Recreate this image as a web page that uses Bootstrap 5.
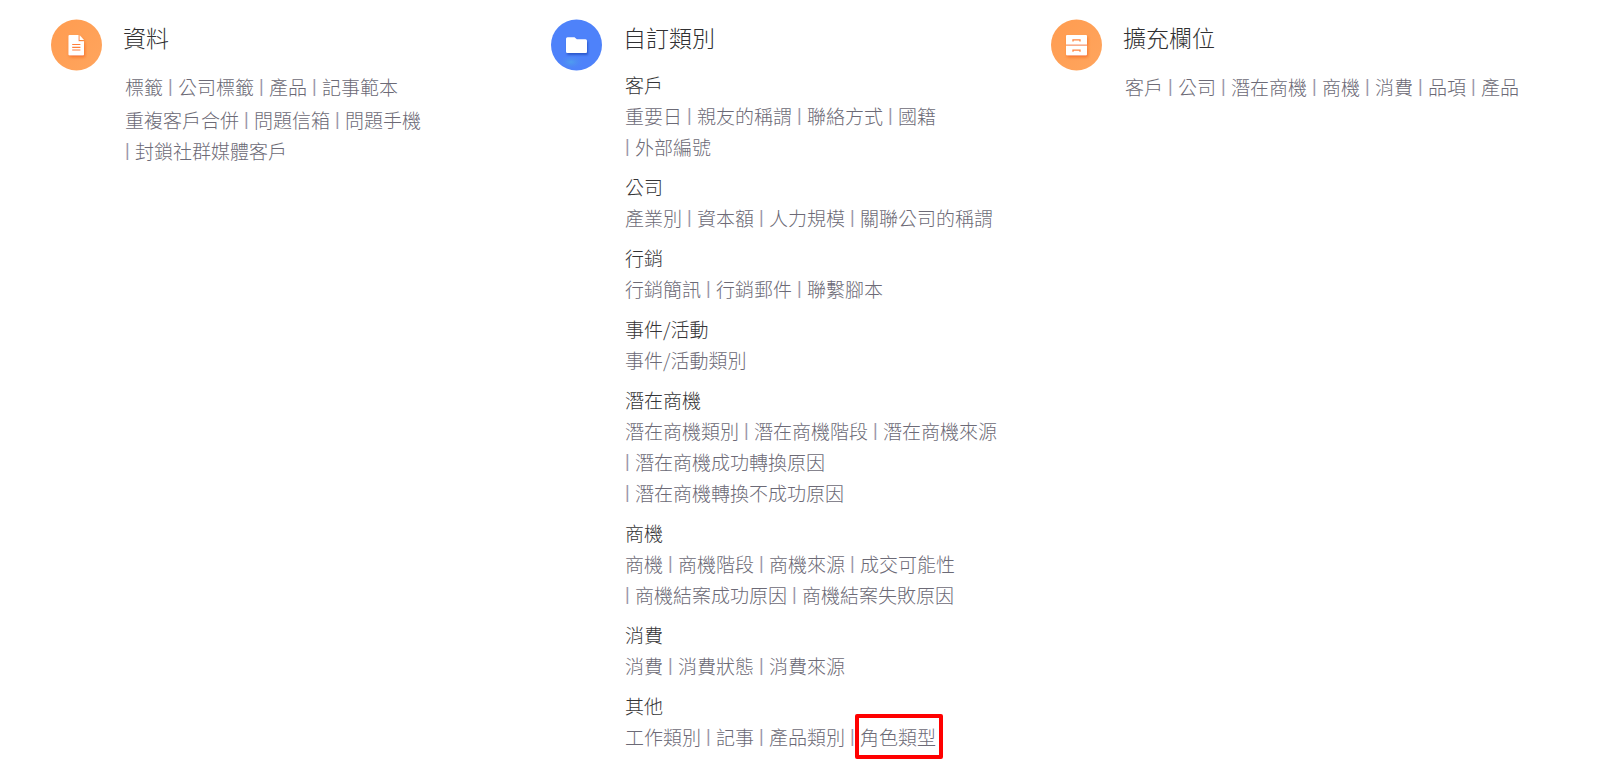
<!DOCTYPE html>
<html lang="zh-Hant">
<head>
<meta charset="utf-8">
<meta name="viewport" content="width=device-width, initial-scale=1">
<title>設定</title>
<link href="https://cdn.jsdelivr.net/npm/bootstrap@5.3.0/dist/css/bootstrap.min.css" rel="stylesheet">
<style>
  body { font-family: "Noto Sans CJK TC", "Liberation Sans", sans-serif; font-weight: 300; font-size: 19px; line-height: 31px; background: #fff; }
  .settings { padding: 19px 50px 24px; }
  .settings-icon { width: 52px; height: 52px; margin-right: 21px; }
  .panel-title { font-size: 23px; font-weight: 300; line-height: 37px; color: #303032; margin: 0; }
  .panel-body { padding: 0 24px 0 2px; }
  .spaced { padding-top: 15px; }
  .row-gap-after { margin-bottom: 2px; }
  .group { margin-bottom: 9px; }
  .group-title { font-size: 19px; font-weight: 300; line-height: 31px; color: #343436; margin: 0; }
  .groups { padding-top: 13px; }
  .link-row { column-gap: 5px; }
  .link-row li { display: flex; height: 31px; }
  .link-row a { color: #6c6a76; text-decoration: none; white-space: nowrap; }
  .link-row a:hover { color: #4f83f5; }
  .link-row li:not(:first-child)::before { content: "|"; width: 10px; color: #9c98ab; font-family: "Liberation Sans", sans-serif; font-size: 18px; }
  .link-row .highlight { position: relative; }
  .highlight::after { content: ""; position: absolute; inset: -7px -7px -7px -5px; border: 4px solid #f00; border-radius: 2px; pointer-events: none; }
</style>
</head>
<body>
<main class="container-fluid settings">
  <div class="row g-0">
    <section class="col-4 d-flex align-items-start">
      <svg class="settings-icon flex-shrink-0" viewBox="0 0 52 52" aria-hidden="true">
        <defs>
          <linearGradient id="orange" x1="0" y1="0" x2="1" y2="1"><stop offset="0" stop-color="#ff9c50"/><stop offset="1" stop-color="#ffa55e"/></linearGradient>
          <filter id="glow" x="-50%" y="-50%" width="200%" height="200%"><feDropShadow dx="1" dy="2" stdDeviation="1.5" flood-color="#f2621c" flood-opacity=".7"/></filter>
        </defs>
        <circle cx="26.5" cy="26" r="25.5" fill="url(#orange)"/>
        <g filter="url(#glow)">
          <path fill="#fff" d="M19.500 16h9v6.200h5.500v13.300a.8.8 0 0 1-.8.8H19.300a.8.8 0 0 1-.8-.8V17a1 1 0 0 1 1-1z"/>
          <path fill="#fff" d="M29.700 16.200v4.700h4.300z"/>
        </g>
        <path stroke="#ff7f3c" stroke-width="1.200" d="M22.200 25.500h8.200M22.200 28.300h8.200M22.200 31h8.200"/>
      </svg>
      <div class="flex-grow-1">
        <h2 class="panel-title">資料</h2>
        <div class="panel-body spaced">
          <ul class="link-row row-gap-after list-unstyled d-flex flex-wrap">
            <li><a href="#">標籤</a></li><li><a href="#">公司標籤</a></li><li><a href="#">產品</a></li><li><a href="#">記事範本</a></li>
          </ul>
          <ul class="link-row list-unstyled d-flex flex-wrap mb-0">
            <li><a href="#">重複客戶合併</a></li><li><a href="#">問題信箱</a></li><li><a href="#">問題手機</a></li><li><a href="#">封鎖社群媒體客戶</a></li>
          </ul>
        </div>
      </div>
    </section>

    <section class="col-4 d-flex align-items-start">
      <svg class="settings-icon flex-shrink-0" viewBox="0 0 52 52" aria-hidden="true">
        <defs>
          <radialGradient id="speck"><stop offset="0" stop-color="#4fa5ec" stop-opacity=".8"/><stop offset="1" stop-color="#4f8af0" stop-opacity="0"/></radialGradient>
          <filter id="shade" x="-50%" y="-50%" width="200%" height="200%"><feDropShadow dx="1" dy="2" stdDeviation="1.2" flood-color="#1a45b8" flood-opacity=".7"/></filter>
        </defs>
        <circle cx="26.5" cy="26" r="25.5" fill="#4e82fa"/>
        <ellipse cx="21" cy="43" rx="12" ry="7" fill="url(#speck)"/>
        <path filter="url(#shade)" fill="#fff" d="M17.500 18.300h7l2.300 2h8.700a1.500 1.500 0 0 1 1.500 1.500v10.800a1.500 1.500 0 0 1-1.500 1.500h-18a1.500 1.500 0 0 1-1.500-1.500V19.800a1.500 1.500 0 0 1 1.500-1.500z"/>
      </svg>
      <div class="flex-grow-1">
        <h2 class="panel-title">自訂類別</h2>
        <div class="panel-body groups">
          <div class="group">
            <h3 class="group-title">客戶</h3>
            <ul class="link-row list-unstyled d-flex flex-wrap mb-0">
              <li><a href="#">重要日</a></li><li><a href="#">親友的稱謂</a></li><li><a href="#">聯絡方式</a></li><li><a href="#">國籍</a></li><li class="w-100"><a href="#">外部編號</a></li>
            </ul>
          </div>
          <div class="group">
            <h3 class="group-title">公司</h3>
            <ul class="link-row list-unstyled d-flex flex-wrap mb-0">
              <li><a href="#">產業別</a></li><li><a href="#">資本額</a></li><li><a href="#">人力規模</a></li><li><a href="#">關聯公司的稱謂</a></li>
            </ul>
          </div>
          <div class="group">
            <h3 class="group-title">行銷</h3>
            <ul class="link-row list-unstyled d-flex flex-wrap mb-0">
              <li><a href="#">行銷簡訊</a></li><li><a href="#">行銷郵件</a></li><li><a href="#">聯繫腳本</a></li>
            </ul>
          </div>
          <div class="group">
            <h3 class="group-title">事件/活動</h3>
            <ul class="link-row list-unstyled d-flex flex-wrap mb-0">
              <li><a href="#">事件/活動類別</a></li>
            </ul>
          </div>
          <div class="group">
            <h3 class="group-title">潛在商機</h3>
            <ul class="link-row list-unstyled d-flex flex-wrap mb-0">
              <li><a href="#">潛在商機類別</a></li><li><a href="#">潛在商機階段</a></li><li><a href="#">潛在商機來源</a></li><li><a href="#">潛在商機成功轉換原因</a></li><li><a href="#">潛在商機轉換不成功原因</a></li>
            </ul>
          </div>
          <div class="group">
            <h3 class="group-title">商機</h3>
            <ul class="link-row list-unstyled d-flex flex-wrap mb-0">
              <li><a href="#">商機</a></li><li><a href="#">商機階段</a></li><li><a href="#">商機來源</a></li><li><a href="#">成交可能性</a></li><li><a href="#">商機結案成功原因</a></li><li><a href="#">商機結案失敗原因</a></li>
            </ul>
          </div>
          <div class="group">
            <h3 class="group-title">消費</h3>
            <ul class="link-row list-unstyled d-flex flex-wrap mb-0">
              <li><a href="#">消費</a></li><li><a href="#">消費狀態</a></li><li><a href="#">消費來源</a></li>
            </ul>
          </div>
          <div>
            <h3 class="group-title">其他</h3>
            <ul class="link-row list-unstyled d-flex flex-wrap mb-0">
              <li><a href="#">工作類別</a></li><li><a href="#">記事</a></li><li><a href="#">產品類別</a></li><li><a href="#" class="highlight">角色類型</a></li>
            </ul>
          </div>
        </div>
      </div>
    </section>

    <section class="col-4 d-flex align-items-start">
      <svg class="settings-icon flex-shrink-0" viewBox="0 0 52 52" aria-hidden="true">
        <circle cx="26.5" cy="26" r="25.5" fill="url(#orange)"/>
        <g filter="url(#glow)" fill="#fff">
          <path d="M17 16h19a1 1 0 0 1 1 1v8.500H16V17a1 1 0 0 1 1-1z"/>
          <path d="M16 26.700h21v8.600a1 1 0 0 1-1 1H17a1 1 0 0 1-1-1z"/>
        </g>
        <path fill="none" stroke="#ff8540" stroke-width="1.300" d="M23 22.500v-1.600h7v1.600M23 32.700v-1.600h7v1.600"/>
      </svg>
      <div class="flex-grow-1">
        <h2 class="panel-title">擴充欄位</h2>
        <div class="panel-body spaced">
          <ul class="link-row list-unstyled d-flex flex-wrap mb-0">
            <li><a href="#">客戶</a></li><li><a href="#">公司</a></li><li><a href="#">潛在商機</a></li><li><a href="#">商機</a></li><li><a href="#">消費</a></li><li><a href="#">品項</a></li><li><a href="#">產品</a></li>
          </ul>
        </div>
      </div>
    </section>
  </div>
</main>
<script src="https://cdn.jsdelivr.net/npm/bootstrap@5.3.0/dist/js/bootstrap.bundle.min.js"></script>
</body>
</html>
